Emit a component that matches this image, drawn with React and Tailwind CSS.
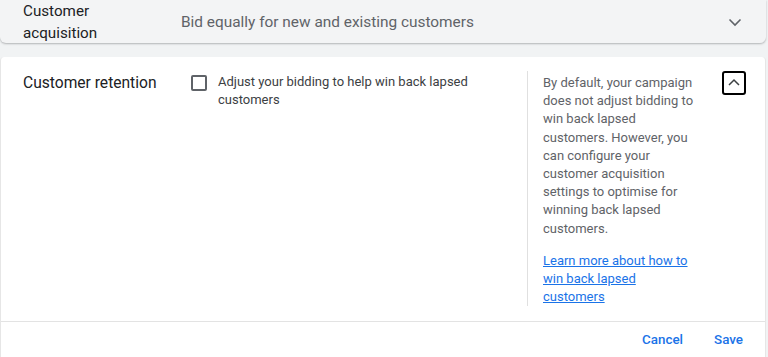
import React from "react";

export default function App() {
  return (
    <div
      className="w-[768px] h-[357px] overflow-hidden bg-[#f1f3f4] text-[#202124]"
      style={{ fontFamily: "Roboto, 'Liberation Sans', sans-serif" }}
    >
      <div className="w-[766px] h-[43px] bg-[#f3f4f5] rounded-b-[6px] shadow-[0_1px_2px_rgba(60,64,67,0.35)] flex items-center">
        <div className="w-[181px] pl-[23px] text-[15.2px] leading-[22px] text-[#202124]">
          Customer
          <br />
          acquisition
        </div>
        <div className="flex-1 text-[15.4px] leading-[22px] text-[#5f6368]">
          Bid equally for new and existing customers
        </div>
        <svg className="w-[24px] h-[24px] mr-[19px]" viewBox="0 0 24 24" fill="none">
          <path d="M6.5 9.5 L12 15 L17.5 9.5" stroke="#5f6368" strokeWidth="1.6" />
        </svg>
      </div>

      <div className="mt-[14px] w-[766px] h-[300px] bg-white rounded-t-[4px] border-x border-[#e6e6e6] flex flex-col">
        <div className="flex pt-[14px] pb-[15px] border-b border-[#e3e3e3]">
          <div className="w-[190px] pl-[22px] pt-[1px] text-[15.6px] leading-[22px] text-[#202124]">
            Customer retention
          </div>
          <div className="w-[336px] flex items-start pr-[16px]">
            <div className="mt-[4px] w-[16px] h-[16px] border-2 border-[#5f6368] rounded-[2px] shrink-0" />
            <div className="ml-[11px] text-[13px] leading-[18px] text-[#3c4043] pt-[2px]">
              Adjust your bidding to help win back lapsed customers
            </div>
          </div>
          <div className="border-l border-[#e0e0e0] pl-[15px] w-[180px]">
            <div className="w-[155px] text-[13px] leading-[18.2px] text-[#5f6368] pt-[3px]">
              By default, your campaign does not adjust bidding to win back lapsed customers. However, you can configure your customer acquisition settings to optimise for winning back lapsed customers.
            </div>
            <a
              href="#"
              className="block mt-[14px] w-[155px] text-[13px] leading-[18.2px] text-[#1a73e8] underline"
            >
              Learn more about how to win back lapsed customers
            </a>
          </div>
          <div className="ml-[15px]">
            <div className="w-[24px] h-[24px] border-2 border-black rounded-[3px] flex items-center justify-center">
              <svg className="w-[20px] h-[20px]" viewBox="0 0 24 24" fill="none">
                <path d="M6 14.5 L12 8.5 L18 14.5" stroke="#3c4043" strokeWidth="1.8" />
              </svg>
            </div>
          </div>
        </div>
        <div className="flex justify-end items-center h-[36px] pr-[22px] gap-[31px] text-[13.4px] font-medium text-[#1a73e8]">
          <span>Cancel</span>
          <span>Save</span>
        </div>
      </div>
    </div>
  );
}
